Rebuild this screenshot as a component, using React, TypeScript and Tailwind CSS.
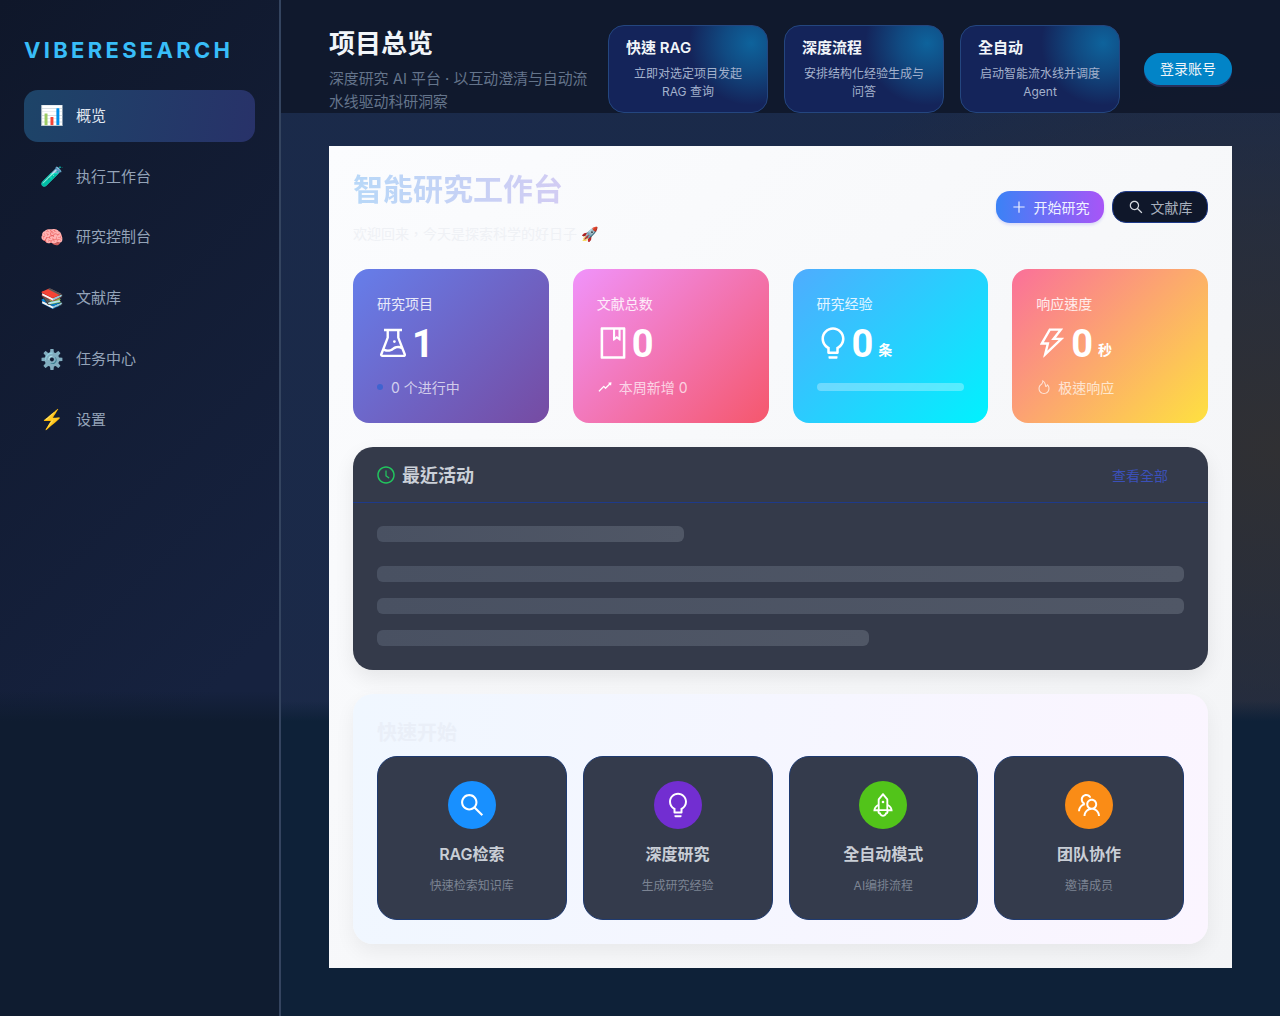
import {
  AiOutlineBook,
  AiOutlineBulb,
  AiOutlineClockCircle,
  AiOutlineExperiment,
  AiOutlineFire,
  AiOutlinePlus,
  AiOutlineRise,
  AiOutlineRocket,
  AiOutlineSearch,
  AiOutlineTeam,
  AiOutlineThunderbolt,
} from "react-icons/ai";

const navItems = [
  { emoji: "📊", label: "概览", active: true },
  { emoji: "🧪", label: "执行工作台" },
  { emoji: "🧠", label: "研究控制台" },
  { emoji: "📚", label: "文献库" },
  { emoji: "⚙️", label: "任务中心" },
  { emoji: "⚡", label: "设置" },
];

const modes = [
  { title: "快速 RAG", desc: "立即对选定项目发起 RAG 查询" },
  { title: "深度流程", desc: "安排结构化经验生成与问答" },
  { title: "全自动", desc: "启动智能流水线并调度 Agent" },
];

const quickStarts = [
  { title: "RAG检索", desc: "快速检索知识库", color: "bg-[#1890ff]", Icon: AiOutlineSearch },
  { title: "深度研究", desc: "生成研究经验", color: "bg-[#722ed1]", Icon: AiOutlineBulb },
  { title: "全自动模式", desc: "AI编排流程", color: "bg-[#52c41a]", Icon: AiOutlineRocket },
  { title: "团队协作", desc: "邀请成员", color: "bg-[#fa8c16]", Icon: AiOutlineTeam },
];

function Sidebar() {
  return (
    <aside className="w-[281px] shrink-0 border-r-2 border-[#34445f] bg-[linear-gradient(180deg,rgba(15,28,48,0)_68%,#0f1c30_71%),linear-gradient(135deg,#0f172a_0%,#16223f_70%)] px-6 pt-[36px]">
      <div className="mb-[25.6px] text-[22px] font-bold leading-[28px] tracking-[3.3px] text-[#38bdf8]">VIBERESEARCH</div>
      <nav className="flex flex-col gap-2">
        {navItems.map((item) => (
          <div
            key={item.label}
            className={`flex h-[52.8px] items-center gap-3 rounded-[14px] px-4 text-[15px] ${
              item.active
                ? "bg-[linear-gradient(100deg,#1d4468_0%,#283269_100%)] text-[#e2e8f0]"
                : "text-[#94a3b8]"
            }`}
          >
            <span className="w-6 text-center text-[19.2px] leading-none">{item.emoji}</span>
            <span>{item.label}</span>
          </div>
        ))}
      </nav>
    </aside>
  );
}

function TopBar() {
  return (
    <header className="flex h-[113px] items-start justify-between bg-[#0f172a]/90 pl-12 pr-12 pt-[26px]">
      <div className="w-[265px] shrink-0">
        <h1 className="text-[26px] font-semibold leading-[36px] text-[#f1f5f9]">项目总览</h1>
        <p className="mt-[6px] text-[14.88px] leading-[23px] text-[#64748b]">深度研究 AI 平台 · 以互动澄清与自动流水线驱动科研洞察</p>
      </div>
      <div className="-mt-px flex items-center gap-6">
        <div className="flex gap-4">
          {modes.map((m) => (
            <div
              key={m.title}
              className="h-[88px] w-40 rounded-2xl border border-[#24467f] bg-[#14245a] bg-[radial-gradient(circle_62px_at_90%_20%,#0e639c_0%,rgba(14,99,156,0.6)_45%,rgba(20,36,90,0)_100%)] px-[17px] pt-[11px]"
            >
              <div className="text-[15px] font-semibold leading-[22px] text-[#f1f5f9]">{m.title}</div>
              <p className="mt-[6px] text-center text-[12px] leading-[18px] text-[#a3b1cc]">{m.desc}</p>
            </div>
          ))}
        </div>
        <button className="h-[32px] w-[88px] rounded-full bg-[#0284c7] pb-[2px] text-[14px] text-[#f1f5f9] shadow-[0_2px_0_#27305c]">登录账号</button>
      </div>
    </header>
  );
}

function StatCard({
  label,
  gradient,
  icon,
  value,
  unit,
  footer,
}: {
  label: string;
  gradient: string;
  icon: React.ReactNode;
  value: string;
  unit?: string;
  footer: React.ReactNode;
}) {
  return (
    <div className={`h-[154px] rounded-2xl px-6 pt-[24px] text-white ${gradient}`}>
      <div className="text-[14px] leading-[22px] text-white/85">{label}</div>
      <div className="mt-[4px] flex h-[48px] items-center">
        <span className="-ml-[2px] text-[36px] leading-none">{icon}</span>
        <span className="ml-[1px] mt-[2px] font-['Roboto',sans-serif] text-[38px] font-bold leading-none">{value}</span>
        {unit && <span className="ml-[5px] mt-3 text-[14px] font-bold">{unit}</span>}
      </div>
      <div className="mt-[9px] flex h-[22px] items-center text-[14px] text-white/70">{footer}</div>
    </div>
  );
}

function RecentActivity() {
  return (
    <section className="mt-6 rounded-[20px] bg-[#343a4a] shadow-[0_8px_20px_rgba(0,0,0,0.08)]">
      <div className="flex h-[56px] items-center justify-between border-b border-[#1e3a8a] px-6 pt-[1px]">
        <div className="flex items-center gap-[6px] text-[18px] font-semibold text-[#cbd0d8]">
          <AiOutlineClockCircle className="-ml-[1px] text-[20px] text-[#22c55e]" />
          最近活动
        </div>
        <span className="mr-4 text-[14px] text-[#3b50b8]">查看全部</span>
      </div>
      <div className="px-6 pb-6 pt-[23px]">
        <div className="h-4 w-[38%] rounded-md bg-[linear-gradient(90deg,#495162,#505766)]" />
        <div className="mt-6 flex flex-col gap-4">
          <div className="h-4 rounded-md bg-[linear-gradient(90deg,#495162,#505766)]" />
          <div className="h-4 rounded-md bg-[linear-gradient(90deg,#495162,#505766)]" />
          <div className="h-4 w-[61%] rounded-md bg-[linear-gradient(90deg,#495162,#505766)]" />
        </div>
      </div>
    </section>
  );
}

function QuickStart() {
  return (
    <section className="mt-6 rounded-[20px] bg-[linear-gradient(100deg,#f0f7ff_0%,#fbf5ff_100%)] px-6 pb-6 pt-[25px] shadow-[0_8px_20px_rgba(0,0,0,0.06)]">
      <h2 className="text-[20px] font-semibold leading-[28px] text-[#eaeff8]">快速开始</h2>
      <div className="mt-[9px] grid grid-cols-4 gap-4">
        {quickStarts.map(({ title, desc, color, Icon }) => (
          <div key={title} className="flex h-[164px] flex-col items-center rounded-[20px] border border-[#1e3a70] bg-[#343b4c] pt-6">
            <div className={`flex h-12 w-12 items-center justify-center rounded-full text-[28px] text-white ${color}`}>
              <Icon />
            </div>
            <div className="mt-[13px] text-[16px] font-semibold leading-[24px] text-[#c9ced6]">{title}</div>
            <div className="mt-[11px] text-[12px] leading-[18px] text-[#7c8493]">{desc}</div>
          </div>
        ))}
      </div>
    </section>
  );
}

export default function App() {
  return (
    <div className="flex min-h-[1016px] font-['Inter','Noto_Sans_CJK_TC',sans-serif]">
      <Sidebar />
      <main className="flex-1 bg-[linear-gradient(180deg,rgba(14,33,56,0)_69%,#0e2138_71%),radial-gradient(ellipse_620px_420px_at_100%_450px,#303033_0%,rgba(48,48,51,0.55)_55%,rgba(48,48,51,0)_100%),linear-gradient(180deg,#1a2a4a_0%,#1b2947_100%)]">
        <TopBar />
        <div className="px-12 pb-12 pt-[33px]">
          <div className="bg-[linear-gradient(135deg,#fbfcfe_0%,#f3f4f6_100%)] p-6">
            <div className="mb-[25px] flex h-[74px] items-center justify-between">
              <div>
                <h2 className="w-fit bg-[linear-gradient(90deg,#b8d8f8,#d2ccf3)] bg-clip-text text-[30px] font-bold leading-[40px] text-transparent">智能研究工作台</h2>
                <p className="mt-[14px] text-[14px] leading-[22px] text-[#eff1f5]">欢迎回来，今天是探索科学的好日子 🚀</p>
              </div>
              <div className="flex gap-2">
                <button className="flex h-8 w-[108px] items-center justify-center gap-[7px] rounded-[14px] bg-[linear-gradient(90deg,#3b82f6,#a855f7)] text-[14px] text-[#eef2ff] shadow-[0_2px_3px_rgba(99,102,241,0.2)]">
                  <AiOutlinePlus className="text-[16px]" />
                  开始研究
                </button>
                <button className="flex h-8 w-24 items-center justify-center gap-[7px] rounded-[14px] border border-[#1e3a8a] bg-[#0f172a] text-[14px] text-[#a8b0bd]">
                  <AiOutlineSearch className="text-[16px] text-[#d5d9e0]" />
                  文献库
                </button>
              </div>
            </div>

            <div className="grid grid-cols-4 gap-6">
              <StatCard
                label="研究项目"
                gradient="bg-[linear-gradient(135deg,#667eea_0%,#764ba2_100%)]"
                icon={<AiOutlineExperiment />}
                value="1"
                footer={
                  <>
                    <span className="mr-2 h-[6px] w-[6px] rounded-full bg-[#3f63d0]" />0 个进行中
                  </>
                }
              />
              <StatCard
                label="文献总数"
                gradient="bg-[linear-gradient(135deg,#f093fb_0%,#f5576c_100%)]"
                icon={<AiOutlineBook />}
                value="0"
                footer={
                  <>
                    <AiOutlineRise className="mr-[6px] text-[16px] text-white" />本周新增 0
                  </>
                }
              />
              <StatCard
                label="研究经验"
                gradient="bg-[linear-gradient(135deg,#4facfe_0%,#00f2fe_100%)]"
                icon={<AiOutlineBulb />}
                value="0"
                unit="条"
                footer={<div className="h-2 w-full rounded-full bg-white/30" />}
              />
              <StatCard
                label="响应速度"
                gradient="bg-[linear-gradient(135deg,#fa709a_0%,#fee140_100%)]"
                icon={<AiOutlineThunderbolt />}
                value="0"
                unit="秒"
                footer={
                  <>
                    <AiOutlineFire className="mr-[6px] text-[16px]" />极速响应
                  </>
                }
              />
            </div>

            <RecentActivity />
            <QuickStart />
          </div>
        </div>
      </main>
    </div>
  );
}
